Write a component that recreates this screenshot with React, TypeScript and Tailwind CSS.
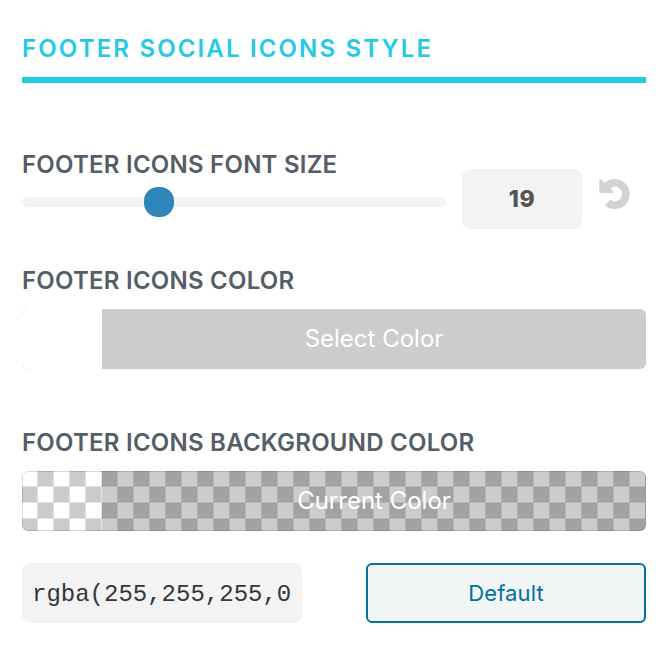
import { useState } from 'react';

type ColorBarProps = {
  label: string;
  transparent?: boolean;
};

// 2x2 block of 16px squares with the soft seams between the tiles
function Checkerboard() {
  return (
    <svg className="absolute inset-0 h-full w-full" aria-hidden="true">
      <defs>
        <pattern id="checker" width="32" height="32" patternUnits="userSpaceOnUse">
          <rect width="32" height="32" fill="#ffffff" />
          <rect x="16" width="16" height="16" fill="#cbcbcb" />
          <rect y="16" width="16" height="16" fill="#cbcbcb" />
          <path d="M0 15.5H32M0 31.5H32M15.5 0V32M31.5 0V32" stroke="#e2e2e2" />
        </pattern>
      </defs>
      <rect width="100%" height="100%" fill="url(#checker)" />
    </svg>
  );
}

function UndoIcon() {
  return (
    <svg width="32" height="32" viewBox="0 0 32 32" fill="none">
      <path
        d="M8.2 8.7A11.2 11.2 0 1 1 9.5 24.6"
        stroke="#d2d2d2"
        strokeWidth="7.6"
      />
      <path
        d="M1.3 2.4C1.3 1.2 2.6 .8 3.4 1.6L6.4 4.7L13.4 11.6L15.1 13.3C15.8 14 15.4 15 14.4 15H2.6C1.8 15 1.3 14.5 1.3 13.7Z"
        fill="#d2d2d2"
      />
    </svg>
  );
}

function Label({ children }: { children: string }) {
  return (
    <h3 className="text-2xl leading-[30px] font-semibold tracking-[0.24px] whitespace-nowrap text-[#555d66]">
      {children}
    </h3>
  );
}

function ColorBar({ label, transparent = false }: ColorBarProps) {
  return (
    <button
      className={
        transparent
          ? 'relative flex h-[60px] w-full overflow-hidden rounded-md bg-white'
          : 'relative flex h-[60px] w-full overflow-hidden rounded-md bg-[#cccccc]'
      }
    >
      {transparent && <Checkerboard />}
      <span
        className={transparent ? 'w-20 shrink-0' : 'h-full w-20 shrink-0 rounded-l-md bg-white'}
      />
      <span
        className={
          transparent
            ? 'relative flex h-full flex-1 items-center justify-center bg-black/20 text-2xl text-white'
            : 'relative flex h-full flex-1 items-center justify-center text-2xl text-white'
        }
      >
        {label}
      </span>
      {transparent && <span className="absolute inset-0 rounded-md border border-black/15" />}
    </button>
  );
}

export default function App() {
  const [fontSize] = useState(19);

  return (
    <div className="h-[649px] w-[662px] overflow-hidden bg-white pr-4 pl-[22px] font-['Inter',sans-serif]">
      <h2 className="h-[83px] border-b-6 border-[#24cae4] pt-[34px] text-2xl leading-[30px] font-semibold tracking-[2.15px] text-[#24cae4]">
        FOOTER SOCIAL ICONS STYLE
      </h2>

      <div className="flex pt-[67px]">
        <div className="w-[424px]">
          <Label>FOOTER ICONS FONT SIZE</Label>
          <div className="relative mt-[17px] h-2.5 rounded-[5px] bg-[#f3f3f3]">
            <div className="absolute top-[-10px] left-[122px] size-[30px] rounded-[14px] bg-[#2f86ba]" />
          </div>
        </div>
        <div className="mt-[19px] ml-4 flex h-[60px] w-[120px] items-center justify-center rounded-lg bg-[#f3f3f3] text-[23px] font-extrabold tracking-[0.5px] text-[#555555]">
          {fontSize}
        </div>
        <button className="mt-7 ml-4 size-8">
          <UndoIcon />
        </button>
      </div>

      <section className="mt-[37px]">
        <Label>FOOTER ICONS COLOR</Label>
        <div className="mt-[13px]">
          <ColorBar label="Select Color" />
        </div>
      </section>

      <section className="mt-[59px]">
        <Label>FOOTER ICONS BACKGROUND COLOR</Label>
        <div className="mt-[13px]">
          <ColorBar label="Current Color" transparent />
        </div>
      </section>

      <div className="mt-8 flex justify-between">
        <div className="flex h-[60px] w-[280px] items-center overflow-hidden rounded-lg bg-[#f3f3f3] pt-[3px] pl-2.5 font-['Liberation_Mono',monospace] text-2xl text-[#32373c]">
          rgba(255,255,255,0
        </div>
        <button className="h-[60px] w-[280px] rounded-md border-2 border-[#0071a1] bg-[#f1f5f6] text-[22px] tracking-[0.1px] text-[#0071a1]">
          Default
        </button>
      </div>
    </div>
  );
}
